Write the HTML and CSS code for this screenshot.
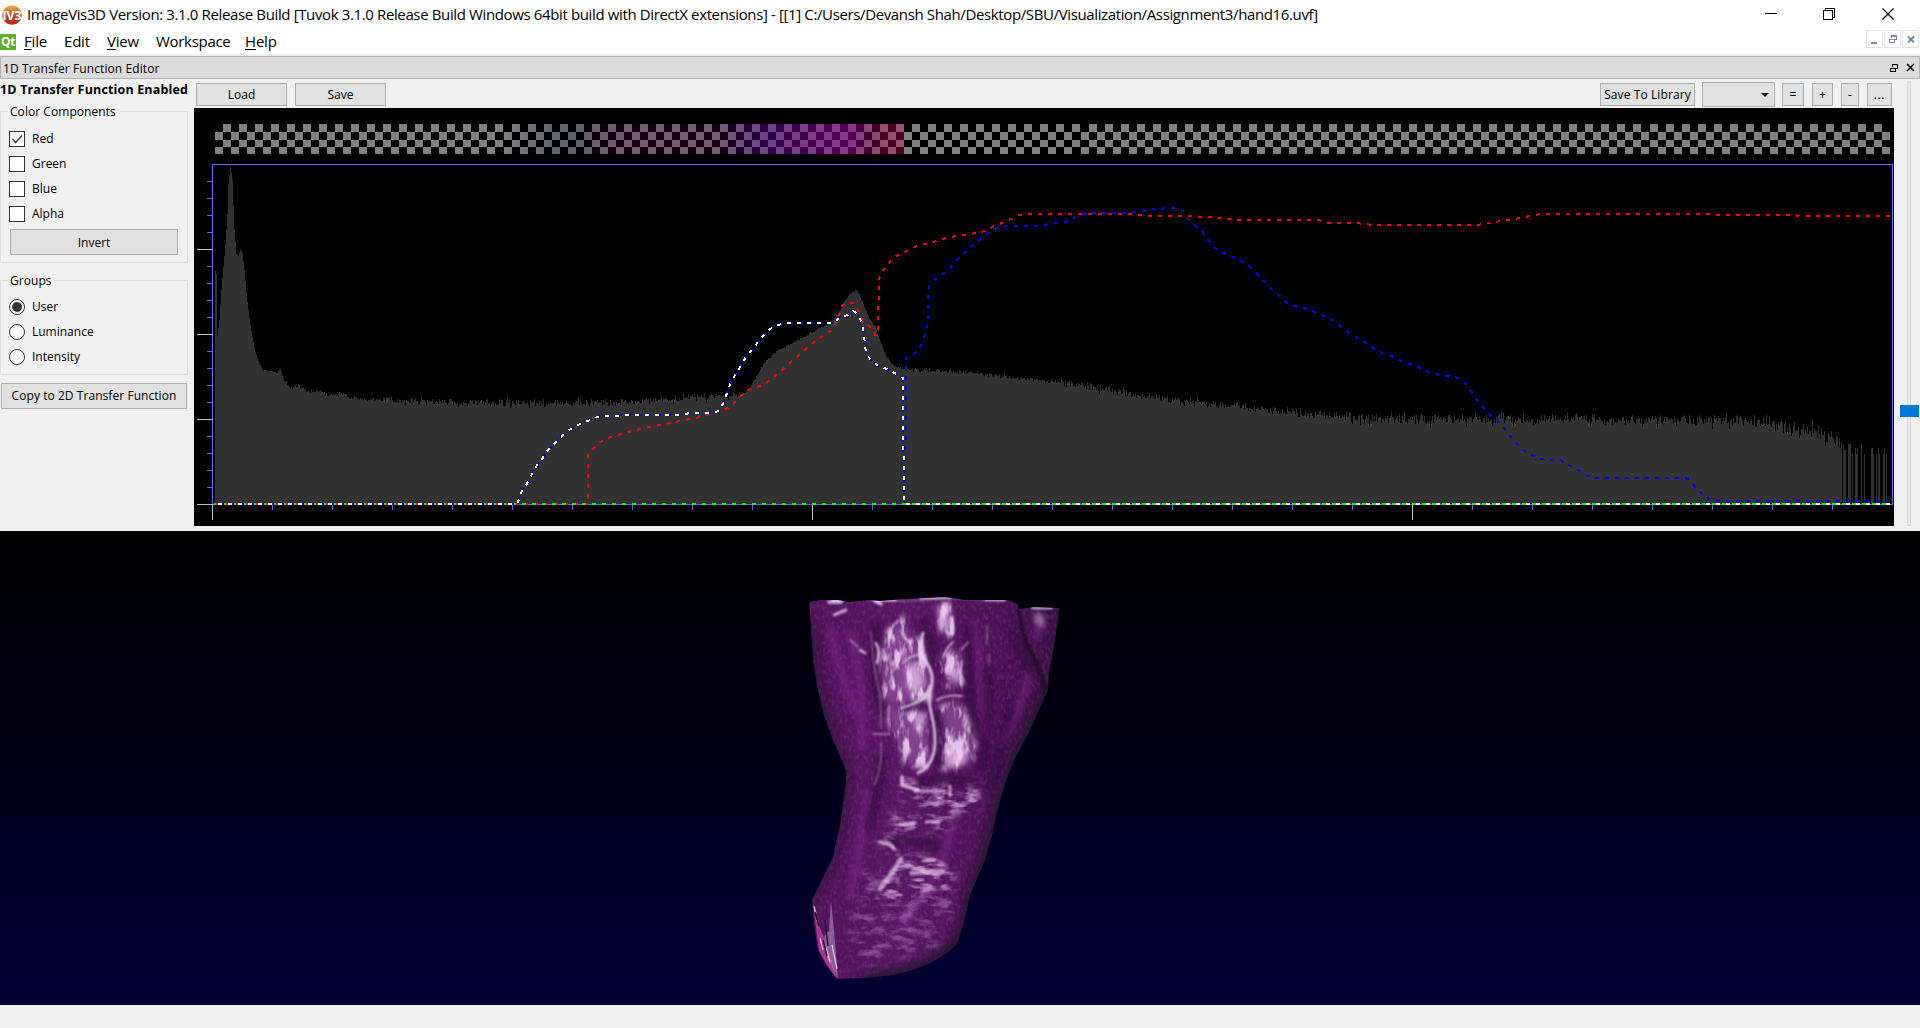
FILE: index.html
```html
<!DOCTYPE html>
<html lang="en">
<head>
<meta charset="utf-8">
<title>ImageVis3D</title>
<link rel="stylesheet" href="styles.css">
</head>
<body>
<div class="app">
  <header class="titlebar">
    <svg class="logo" width="20" height="22" viewBox="0 0 20 22">
      <defs><linearGradient id="lg" x1="0" y1="0" x2="0" y2="1"><stop offset="0" stop-color="#f7b44a"/><stop offset=".5" stop-color="#b8502a"/><stop offset="1" stop-color="#c01c12"/></linearGradient></defs>
      <circle cx="10" cy="11" r="9.800" fill="url(#lg)"/>
      <text x="10" y="15.500" text-anchor="middle" class="logo-text" textLength="19" lengthAdjust="spacingAndGlyphs">IV3</text>
    </svg>
    <span class="title">ImageVis3D Version: 3.1.0 Release Build [Tuvok 3.1.0 Release Build Windows 64bit build with DirectX extensions] - [[1] C:/Users/Devansh Shah/Desktop/SBU/Visualization/Assignment3/hand16.uvf]</span>
    <svg class="winctl" width="140" height="28" viewBox="0 0 140 28" fill="none" stroke="#000" shape-rendering="crispEdges">
      <path d="M0 13.5H12M58.500 10.500h9v9h-9zM60.500 10v-1.500h9v9h-1.500"/>
      <path d="M117.500 8.500l11 11M128.500 8.500l-11 11" shape-rendering="auto" stroke-width="1.200"/>
    </svg>
  </header>
  <nav class="menubar">
    <span class="qt">Qt</span>
    <span class="m m-file"><u>F</u>ile</span><span class="m m-edit">Edit</span><span class="m m-view"><u>V</u>iew</span><span class="m m-work">Workspace</span><span class="m m-help"><u>H</u>elp</span>
    <div class="mdi">
      <span><svg width="15" height="16" viewBox="0 0 15 16"><path d="M4 11h6v2H4z" fill="#7b8a97"/></svg></span>
      <span><svg width="15" height="16" viewBox="0 0 15 16" fill="none" stroke="#7b8a97" shape-rendering="crispEdges"><path d="M4.500 8.500h5v3h-5zM4 8h6M6.500 7V4.500h5v4H10M6 5h6" /></svg></span>
      <span><svg width="15" height="16" viewBox="0 0 15 16"><path d="M5 5.500l6 6M11 5.500l-6 6" stroke="#7b8a97" stroke-width="2"/></svg></span>
    </div>
  </nav>
  <div class="docktitle">
    <span>1D Transfer Function Editor</span>
    <svg width="28" height="14" viewBox="0 0 28 14" fill="none" stroke="#000" shape-rendering="crispEdges">
      <path d="M1.500 7.500h5v3h-5zM1 7h6M3.500 6V3.500h5v4H7M3 3h6"/>
      <path d="M18 3l7 7M25 3l-7 7" stroke-width="1.500" shape-rendering="auto"/>
    </svg>
  </div>
  <main class="dock">
    <aside class="side">
      <div class="enabled"><b>1D Transfer Function Enabled</b></div>
      <fieldset class="group colors">
        <legend>Color Components</legend>
        <label><i class="box"><svg width="14" height="14" viewBox="0 0 14 14"><path d="M2.500 7l3.200 3.500L12 3.500" fill="none" stroke="#333" stroke-width="1.300"/></svg></i>Red</label>
        <label><i class="box"></i>Green</label>
        <label><i class="box"></i>Blue</label>
        <label><i class="box"></i>Alpha</label>
        <button class="btn invert">Invert</button>
      </fieldset>
      <fieldset class="group groups">
        <legend>Groups</legend>
        <label><i class="radio on"></i>User</label>
        <label><i class="radio"></i>Luminance</label>
        <label><i class="radio"></i>Intensity</label>
      </fieldset>
      <button class="btn copy">Copy to 2D Transfer Function</button>
    </aside>
    <section class="editor">
      <div class="toolbar">
        <button class="btn wide">Load</button>
        <button class="btn wide">Save</button>
        <span class="grow"></span>
        <button class="btn lib">Save To Library</button>
        <span class="combo"></span>
        <button class="btn b-eq">=</button>
        <button class="btn b-plus">+</button>
        <button class="btn b-minus">-</button>
        <button class="btn b-more">...</button>
      </div>
      <svg class="plot" width="1700" height="418" viewBox="194 108 1700 418" shape-rendering="crispEdges">
        <defs>
          <linearGradient id="tf" gradientUnits="userSpaceOnUse" x1="500" y1="0" x2="904" y2="0">
            <stop offset="0" stop-color="#000010" stop-opacity="0"/>
            <stop offset=".12" stop-color="#00002c" stop-opacity=".2"/>
            <stop offset=".2" stop-color="#000030" stop-opacity=".25"/>
            <stop offset=".24" stop-color="#380040" stop-opacity=".27"/>
            <stop offset=".54" stop-color="#440048" stop-opacity=".27"/>
            <stop offset=".61" stop-color="#500080" stop-opacity=".4"/>
            <stop offset=".67" stop-color="#600090" stop-opacity=".5"/>
            <stop offset=".76" stop-color="#7c008c" stop-opacity=".53"/>
            <stop offset=".83" stop-color="#8c0094" stop-opacity=".56"/>
            <stop offset=".87" stop-color="#94008c" stop-opacity=".58"/>
            <stop offset=".92" stop-color="#900068" stop-opacity=".42"/>
            <stop offset=".95" stop-color="#b00050" stop-opacity=".42"/>
            <stop offset="1" stop-color="#c80060" stop-opacity=".38"/>
          </linearGradient>
        </defs>
        <rect x="194" y="108" width="1700" height="418" fill="#000"/>
        <path id="checker" fill="#808080"/>
        <rect x="500" y="124" width="404" height="30" fill="url(#tf)"/>
        <path id="hist" fill="#323232"/>
        <path fill="#6464ff" d="M212 164h1681v341H212zM213 165v339h1679V165z" fill-rule="evenodd"/>
        <path id="minor" fill="#6464ff"/>
        <path id="major" fill="#c0c0c0"/>
        <g class="curves">
          <path stroke="#f00" stroke-dashoffset="0" d="M214 504H588V455L594 448 600 442 607 438 625 433 640 429 660 425 680 421 700 417 712 413 728 408 735 402 741 396 748 390 765 384 780 372 800 354 815 341 832 330 836 322 839 315 842 306 847 302 853 303 857 308 863 321 871 328 876 336 878 330 879 280 881 273 887 265 894 257 903 253 911 249 919 245 930 243 946 238 956 236 976 233 985 231 994 226 1002 223 1011 219 1019 215 1028 214 1130 214 1146 216 1181 216 1210 217 1237 220 1319 220 1326 223 1355 223 1374 225 1475 225 1485 224 1494 222 1503 221 1520 218 1530 216 1541 214 1712 214 1720 215 1793 215 1800 216 1891 216"/>
          <path stroke="#0f0" stroke-dashoffset="2" d="M214 504H1891"/>
          <path stroke="#00f" stroke-dashoffset="4" d="M214 504H517L518 502 522 491 528 482 535 468 542 459 548 450 560 438 568 431 575 426 590 420 600 416 640 415 680 415 690 413 710 413 719 411 724 402 728 390 731 382 740 367 747 355 753 349 761 338 770 329 778 325 787 323 834 323 840 317 848 315 853 311 858 314 862 324 864 335 866 354 872 361 878 366 890 370 896 374 903 378 903 407 904 504 906 420 906 358 914 354 921 346 925 335 928 322 928 300 929 286 933 281 941 275 949 269 956 261 962 255 970 248 977 242 983 236 992 231 1000 227 1010 226 1040 226 1049 224 1060 223 1069 221 1077 216 1086 213 1115 213 1137 212 1153 209 1176 208 1183 211 1188 219 1195 225 1203 232 1208 240 1214 247 1221 252 1231 256 1240 260 1249 266 1255 272 1262 279 1268 286 1275 292 1282 298 1288 304 1298 307 1308 309 1318 313 1326 317 1335 321 1342 328 1351 334 1359 339 1368 344 1376 350 1384 354 1394 357 1403 362 1412 365 1421 368 1430 373 1440 375 1450 376 1458 378 1466 384 1471 391 1477 400 1483 407 1490 415 1498 421 1504 428 1510 436 1516 443 1523 450 1532 455 1538 459 1560 460 1569 465 1577 469 1585 475 1594 478 1686 478 1692 482 1697 490 1704 495 1712 501 1888 501"/>
          <path stroke="#fff" stroke-dashoffset="6" d="M214 504H517L518 502 522 491 528 482 535 468 542 459 548 450 560 438 568 431 575 426 590 420 600 416 640 415 680 415 690 413 710 413 719 411 724 402 728 390 731 382 740 367 747 355 753 349 761 338 770 329 778 325 787 323 834 323 840 317 848 315 853 311 858 314 862 324 864 335 866 354 872 361 878 366 890 370 896 374 903 378 903 407 904 504"/>
          <path stroke="#fff" stroke-dashoffset="0" d="M906 504H1890"/>
        </g>
      </svg>
    </section>
    <div class="slider"><i class="handle"></i></div>
  </main>
  <section class="view">
    <svg width="300" height="400" viewBox="790 590 300 400">
      <defs>
        <clipPath id="hand"><path d="M809 602L820 600 838 600 848 602 870 600 880 601 905 599 945 597 965 600 1008 600 1017 604 1019 609 1034 607 1059 608 Q1056 640 1049 672L1048 690 1038 712 1029 732 1014 760 1008 775 1000 800 992 835 985 860 970 895 963 925 957 944 Q925 976 860 978L837 979 826 965 818 950 814 925 812 900 833 857 840 825 846 785 846 770 833 740 824 715 818 690 813 660 811 625Z"/></clipPath>
        <linearGradient id="skin" x1="0" x2="1" y1="0" y2="0"><stop offset="0" stop-color="#501359"/><stop offset=".4" stop-color="#571663"/><stop offset=".8" stop-color="#481152"/><stop offset="1" stop-color="#36103c"/></linearGradient>
        <filter id="b1" x="-30%" y="-30%" width="160%" height="160%"><feGaussianBlur stdDeviation=".9"/></filter>
        <filter id="b3" x="-50%" y="-50%" width="200%" height="200%"><feGaussianBlur stdDeviation="3"/></filter>
        <filter id="b7" filterUnits="userSpaceOnUse" x="780" y="580" width="320" height="420"><feGaussianBlur stdDeviation="6"/></filter>
        <filter id="rough" filterUnits="userSpaceOnUse" x="780" y="580" width="320" height="420">
          <feTurbulence type="fractalNoise" baseFrequency=".11 .045" numOctaves="3" seed="8"/>
          <feColorMatrix values="0 0 0 0 1  0 0 0 0 1  0 0 0 0 1  4.500 0 0 0 -2" result="n"/>
          <feGaussianBlur in="SourceGraphic" stdDeviation="3" result="s"/>
          <feComposite in="s" in2="n" operator="in"/>
        </filter>
        <filter id="roughH" filterUnits="userSpaceOnUse" x="780" y="580" width="320" height="420">
          <feTurbulence type="fractalNoise" baseFrequency=".06 .14" numOctaves="3" seed="3"/>
          <feColorMatrix values="0 0 0 0 1  0 0 0 0 1  0 0 0 0 1  3.500 0 0 0 -1.550" result="n"/>
          <feGaussianBlur in="SourceGraphic" stdDeviation="4" result="s"/>
          <feComposite in="s" in2="n" operator="in"/>
        </filter>
        <filter id="grain" filterUnits="userSpaceOnUse" x="780" y="580" width="320" height="420">
          <feTurbulence type="fractalNoise" baseFrequency=".35 .2" numOctaves="2" seed="5"/>
          <feColorMatrix values="0 0 0 0 .58  0 0 0 0 .24  0 0 0 0 .64  2 0 0 0 -.9"/>
          <feComposite in2="SourceGraphic" operator="in"/>
        </filter>
      </defs>
      <g clip-path="url(#hand)">
        <rect x="800" y="590" width="270" height="400" fill="url(#skin)"/>
        <rect x="800" y="590" width="270" height="400" fill="#fff" filter="url(#grain)" opacity=".2"/>
        <g filter="url(#b3)" fill="none" stroke="#8a2a94" stroke-width="8" opacity=".45">
          <path d="M830 625Q838 670 856 715M1030 670Q1022 710 1000 745M972 620Q985 690 985 740M868 790Q858 860 850 900M955 810Q950 860 900 930M1034 640L1043 625M850 630Q866 700 862 750"/>
        </g>
        <g filter="url(#b7)" fill="none" stroke="#1d1420" stroke-width="11">
          <path d="M1052 690L1040 712 1016 760 1002 800 994 835 987 860 972 895 965 925 959 944 922 968 860 984"/>
          <path stroke-width="7" d="M809 625L816 690 831 740 844 770 844 785 831 857 810 900"/>
        </g>
        <path filter="url(#b1)" fill="none" stroke="#1d1022" stroke-width="3" d="M1019 609Q1022 640 1035 660Q1044 680 1046 695"/>
        <g filter="url(#b3)" fill="#b478c0" opacity=".45">
          <path d="M888 636L902 618 914 644 926 640 930 700 904 706 884 702 880 668ZM942 658l20-10 2 38-16 0zM884 706l40 4 8 56-26-4-16-40zM942 708l20-6 12 40-2 20-26 6zM936 606h16v26l-10 2z"/>
        </g>
        <g filter="url(#rough)" fill="#ecd0f0" opacity=".9">
          <path d="M886 632L902 614 914 640 924 636 928 670 932 700 904 706 884 702 880 668Z"/>
          <path d="M936 602h18v34l-12 2zM940 656l22-10 3 42-18 2-12-20zM884 706l40 4 8 60-26-4-16-40zM940 706l22-6 14 40-2 22-14 8-20 0z"/>
        </g>
        <g filter="url(#b3)" fill="#f0ccf4" opacity=".7">
          <path d="M906 664h12l8 20-8 6h-10zM944 748l24 0-3 16-20 5zM915 712l8 0 2 14-10 2zM945 665l12 0 4 16-8 0zM1034 614l8 0 2 12-6 0zM938 606h9l2 24-7 2z"/>
        </g>
        <g filter="url(#b3)" fill="none" stroke="#260930" stroke-width="6" opacity=".7">
          <path d="M876 622Q870 680 884 715M970 625Q964 690 978 740M899 709Q915 707 928 702M917 783Q940 777 975 783M882 755Q880 790 868 830M924 620L928 648M933 640Q931 655 938 662M1012 632Q1024 655 1034 675M986 670Q992 700 982 770M885 842Q910 838 940 848M1010 710L990 790M937 712L939 770"/>
        </g>
        <g filter="url(#roughH)" fill="#dcb4e4" opacity=".75">
          <path d="M900 772l20 14 60 0 0 22-24 6-30-6-26-6zM890 816l60 -4v16l-60 6zM874 836l22 4 6 16 42 2 8 30-34 6-44 10 26-40z"/>
          <path opacity=".45" d="M860 870l96-10 0 50-20 40-70 15-18-20z"/>
        </g>
        <g filter="url(#b1)" fill="none" stroke="#f3dcf6" stroke-linecap="round">
          <path stroke-width="2.600" opacity=".9" d="M923 633Q918 652 926 662Q936 676 930 690Q928 700 931 712Q937 735 934 752Q930 768 918 773"/>
          <path stroke-width="1.600" opacity=".9" d="M901 708Q916 704 926 697M937 700Q948 694 962 696M953 642Q946 648 943 658M903 663Q910 656 917 655M899 620Q886 632 890 638"/>
          <path stroke-width="2.500" opacity=".85" d="M876 643Q881 652 877 663M834 615l12-5M860 650l5 3M902 631q3 10 8 11"/>
          <path stroke-width="1.500" opacity=".6" d="M968 642l-7 8M850 640l8 7M873 734h16"/>
          <path stroke-width="3.500" opacity=".8" d="M952 618V634M829 602h12M875 601l6 3M902 777v8l16 5"/>
          <path stroke-width="2.500" opacity=".85" d="M879 842l12 3 3 3"/>
          <path stroke-width="1.800" opacity=".9" d="M1032 608h20M832 600h12M876 600h20M920 598h30M985 600h20"/>
          <path stroke-width="1.100" opacity=".5" d="M871 632Q874 676 880 693L881 728M881 742Q882 770 874 785M989 654v10M870 601q40 1 75-3 40 2 60 3M987 625v20"/>
          <path stroke-width="5" opacity=".6" d="M901 859Q893 873 880 889M912 873l30-2"/>
          <path stroke-width="2.500" opacity=".75" d="M923 861l12-1M915 791h30M950 786v10M900 825l14-2M926 822l13-1"/>
        </g>
        <path d="M813 903l7 25 8 20 9 31-10-14-8-14z" fill="#a93590"/>
        <path d="M831 900l4 42 3 37-10-20-4-22 5-6z" fill="#9c74ac" opacity=".75"/>
        <path d="M814 906l2 8M820 938l3 12M826 948l4 14M832 945l5 24" stroke="#f5dff5" stroke-width="1.300" opacity=".75"/>
        <path d="M815 912l4 14M823 940l4 16M825 920l3 26" stroke="#23102a" stroke-width="1.500"/>
      </g>
    </svg>
  </section>
  <footer class="status"></footer>
</div>
<script src="plot.js"></script>
</body>
</html>
```
FILE: styles.css
```css
* { box-sizing: border-box; }
body { margin: 0; background: #f0f0f0; color: #000; font-family: "Open Sans", "Noto Sans", sans-serif; font-size: 12px; overflow: hidden; }
.app { width: 1920px; height: 1028px; display: flex; flex-direction: column; background: #f0f0f0; }
.titlebar { height: 29px; background: #fff; display: flex; align-items: center; padding: 0 27px 0 2px; }
.logo { flex: none; margin-right: 5px; }
.logo-text { font: bold 13px "Open Sans", sans-serif; fill: #fff; }
.title { font-size: 15px; letter-spacing: -0.37px; white-space: nowrap; flex: 1; margin-top: -2px; }
.winctl { flex: none; width: 140px; margin-right: -12px; margin-top: -1px; }
.menubar { height: 25px; background: #fff; display: flex; align-items: center; font-size: 15px; letter-spacing: -0.2px; }
.menubar u { text-underline-offset: 2px; text-decoration-thickness: 1px; }
.qt { width: 16px; height: 16px; background: #5fae2e; color: #fff; font: bold 12px/15px "Open Sans", sans-serif; letter-spacing: -0.5px; text-align: center; margin-right: 8px; }
.m { white-space: nowrap; flex: none; margin-top: -2px; }
.m-file { width: 40px; }
.m-edit { width: 43px; }
.m-view { width: 49px; }
.m-work { width: 89px; letter-spacing: -0.3px; }
.m-help { width: 60px; }
.mdi { margin-left: auto; display: flex; gap: 1px; padding: 0 1px 0 0; margin-top: -5px; }
.mdi span { width: 17px; height: 18px; border: 1px solid #e3e3e3; display: flex; }
.docktitle { height: 23px; margin-top: 2px; background: #dbdbdb; border: 1px solid #b4b4b4; display: flex; align-items: center; justify-content: space-between; padding: 0 2px; flex: none; }
.docktitle span { letter-spacing: 0.1px; padding-top: 1px; }
.dock { height: 452px; flex: none; display: flex; }
.side { width: 194px; flex: none; }
.enabled { height: 23px; line-height: 21px; font-size: 12.5px; letter-spacing: 0.16px; white-space: nowrap; }
.group { margin: 0; border: 1px solid #dcdcdc; width: 188px; padding: 0 9px 0 8px; }
.group legend { padding: 1px 2px 0; margin-left: -1px; height: 18px; line-height: 18px; letter-spacing: 0.05px; }
.colors { height: 161px; }
.groups { height: 104px; margin-top: 8px; }
.group label { display: flex; align-items: center; height: 25px; gap: 7px; }
.group legend + label { margin-top: 6px; }
.groups legend + label { margin-top: 5px; }
.box { width: 16px; height: 16px; border: 1px solid #333; background: #fff; display: block; }
.box svg { display: block; }
.radio { width: 16px; height: 16px; border: 1px solid #333; border-radius: 50%; background: #fff; display: flex; align-items: center; justify-content: center; }
.radio.on::after { content: ""; width: 10px; height: 10px; border-radius: 50%; background: #333; }
.btn { font: inherit; color: #000; background: #e1e1e1; border: 1px solid #adadad; padding: 0; border-radius: 0; white-space: nowrap; flex: none; height: 23px; line-height: 20px; }
.invert { display: block; width: 168px; height: 26px; margin: 3px 0 0 1px; line-height: 25px; }
.copy { display: block; width: 186px; height: 26px; margin: 8px 0 0 1px; letter-spacing: 0.06px; }
.editor { width: 1700px; flex: none; }
.toolbar { height: 29px; display: flex; align-items: center; padding: 2px 2px 0; }
.wide { width: 91px; margin-right: 8px; }
.grow { flex: 1; }
.lib { width: 95px; letter-spacing: 0.1px; }
.combo { width: 73px; height: 25px; margin: 0 7px; background: #e1e1e1; border: 1px solid #adadad; display: flex; align-items: center; justify-content: flex-end; padding-right: 5px; }
.combo::after { content: ""; border: 4px solid transparent; border-top-color: #000; border-bottom: 0; }
.b-eq { width: 22px; margin-right: 8px; }
.b-plus { width: 21px; margin-right: 8px; }
.b-minus { width: 18px; margin-right: 8px; }
.b-more { width: 25px; letter-spacing: 0.6px; }
.plot { display: block; }
.curves path { fill: none; stroke-width: 2; stroke-dasharray: 4 6; }
.slider { width: 4px; height: 445px; margin: 2px 0 0 13px; background: #e7eaea; border: 1px solid #d6d6d6; display: flex; justify-content: center; }
.handle { flex: none; width: 19px; height: 12px; margin-top: 323px; background: #0078d7; }
.view { height: 474px; flex: none; background: linear-gradient(#000, #000033); padding: 59px 0 0 790px; }
.view svg { display: block; }
.status { flex: 1; background: #f0f0f0; }
```
FILE: plot.js
```js
const pts = [[215,271],[216,274],[217,336],[219,320],[221,290],[223,267],[225,244],[227,214],[228,184],[230,166],[232,180],[234,230],[236,254],[238,256],[240,249],[242,253],[244,270],[246,292],[249,319],[252,337],[255,352],[259,364],[263,370],[272,371],[277,373],[280,369],[284,382],[290,388],[300,386],[308,391],[320,391],[328,395],[340,393],[352,398],[385,400],[420,401],[470,403],[560,403],[620,402],[660,400],[700,397],[720,396],[740,395],[748,390],[755,378],[765,361],[775,352],[790,344],[805,336],[820,328],[830,323],[838,313],[845,300],[851,293],[855,290],[858,292],[863,304],[868,316],[875,328],[880,342],[887,358],[893,366],[905,369],[932,371],[980,373],[1020,378],[1060,383],[1086,385],[1100,388],[1140,396],[1175,400],[1210,404],[1250,408],[1290,413],[1330,415],[1370,418],[1400,419],[1740,420],[1765,423],[1785,427],[1800,429],[1820,435],[1842,444]];
const bars = [[1843,1,444],[1844,2,450],[1848,3,444],[1852,1,454],[1855,1,448],[1856,2,454],[1857,1,448],[1861,1,444],[1864,1,454],[1871,2,448],[1873,1,454],[1876,1,454],[1878,1,448],[1879,1,454],[1883,1,454],[1884,1,448],[1886,1,454]];

let seed = 7;
const rnd = () => (seed = (seed * 16807) % 2147483647) / 2147483647;

let d = "";
let i = 0;
for (let x = 215; x < 1842; x++) {
  while (pts[i + 1][0] <= x) i++;
  const [x0, y0] = pts[i], [x1, y1] = pts[i + 1];
  const amp = x < 285 ? 0.5 : x < 380 ? 2 : x < 740 ? 4 : x < 910 ? 1 : x < 1060 ? 2.5 : x < 1350 ? 4.5 : x < 1760 ? 6.5 : 10;
  const noise = (rnd() + rnd() + rnd() - 1.5) * amp;
  const y = Math.round(y0 + (y1 - y0) * (x - x0) / (x1 - x0) + noise);
  d += `M${x} ${y}h1V504h-1z`;
}
for (const [x, w, y] of bars) d += `M${x} ${y}h${w}V504h-${w}z`;
document.getElementById("hist").setAttribute("d", d);

// Transparency checkerboard behind the colour preview
const rows = [[124, 8], [132, 8], [140, 7], [147, 7]];
let checker = "";
rows.forEach(([y, h], r) => {
  for (let c = r % 2 ? 0 : 1; c < 209; c += 2) {
    const x = 215 + Math.round(c * 8.014);
    checker += `M${x} ${y}h8v${h}h-8z`;
  }
});
document.getElementById("checker").setAttribute("d", checker);

// Axis ticks
let minor = "", major = "";
for (let k = 1; k <= 20; k++) {
  if (k % 5) minor += `M207 ${164 + 17 * k}h5v1h-5z`;
  else major += `M197 ${164 + 17 * k}h16v1h-16z`;
}
for (let k = 0; k < 28; k++) {
  if (k % 10) minor += `M${212 + 60 * k} 505h1v5h-1z`;
  else major += `M${212 + 60 * k} 505h1v15h-1z`;
}
document.getElementById("minor").setAttribute("d", minor);
document.getElementById("major").setAttribute("d", major);
```
